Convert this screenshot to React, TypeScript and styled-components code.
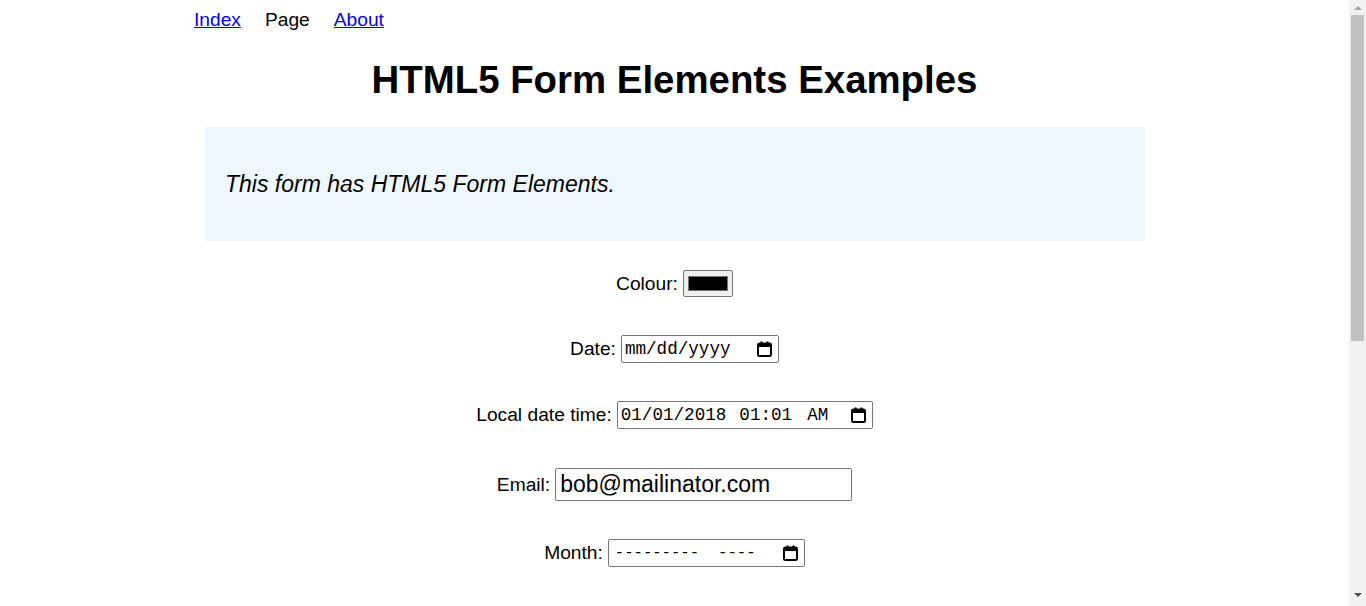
import React from "react";
import styled, { createGlobalStyle } from "styled-components";

const GlobalStyle = createGlobalStyle`
  html, body { margin: 0; padding: 0; height: 100%; overflow: hidden; }
  body {
    font-family: "Liberation Sans", Arial, sans-serif;
    font-size: 19.2px;
    color: #000;
    background: #fff;
  }
`;

const Window = styled.div`
  display: flex;
  height: 606px;
`;

const Viewport = styled.div`
  flex: 1;
  overflow: hidden;
`;

const Scrollbar = styled.div`
  width: 17px;
  background: #f1f1f1;
  display: flex;
  flex-direction: column;
  align-items: center;
`;

const ScrollArrow = styled.div<{ $dir: "up" | "down"; $color: string }>`
  width: 0;
  height: 0;
  border-left: 4px solid transparent;
  border-right: 4px solid transparent;
  ${(p) =>
    p.$dir === "up"
      ? `border-bottom: 4px solid ${p.$color}; margin-top: 6px;`
      : `border-top: 4px solid ${p.$color}; margin-bottom: 9px;`}
`;

const ScrollThumb = styled.div`
  width: 13px;
  height: 326px;
  margin-top: 5px;
  background: #c1c1c1;
`;

const ScrollSpacer = styled.div`
  flex: 1;
`;

const Page = styled.div`
  width: 961px;
  margin: 0 auto;
`;

const NavList = styled.ul`
  display: flex;
  list-style: none;
  margin: 0;
  padding: 9px 0 0 0;
  gap: 24px;
  line-height: 22px;
`;

const NavLink = styled.a`
  color: #0000ee;
  text-decoration: underline;
`;

const NavCurrent = styled.span`
  color: #000;
`;

const Title = styled.h1`
  text-align: center;
  font-size: 38.4px;
  font-weight: bold;
  margin: 27px 0 0 0;
  line-height: 44px;
`;

const Intro = styled.div`
  margin: 25px 10px 0 10px;
  background: #f0f8ff;
  height: 114px;
  padding: 0 21px;
  display: flex;
  align-items: center;
`;

const IntroText = styled.p`
  margin: 0;
  font-style: italic;
  font-size: 23px;
  line-height: 24px;
`;

const Form = styled.form`
  display: flex;
  flex-direction: column;
  align-items: center;
  padding-top: 29px;
`;

const Row = styled.div<{ $gap: number }>`
  margin: 0 0 ${(p) => p.$gap}px 0;
  display: flex;
  align-items: center;
  gap: 5px;
  line-height: 22px;
`;

const ColourInput = styled.input`
  width: 50px;
  height: 27px;
  padding: 1px 2px;
  margin: 0;
  box-sizing: border-box;
  border: 1px solid #767676;
  border-radius: 2px;
  background: #efefef;
`;

const DateField = styled.div<{ $w: number }>`
  width: ${(p) => p.$w}px;
  height: 28px;
  box-sizing: border-box;
  display: flex;
  align-items: center;
  padding: 0 6px 0 3px;
  border: 1px solid #767676;
  border-radius: 2px;
  background: #fff;
  font-family: "Liberation Mono", "DejaVu Sans Mono", monospace;
  font-size: 17.6px;
  color: #000;
  white-space: pre;
`;

const Segment = styled.span<{ $ml?: number; $size?: number }>`
  margin-left: ${(p) => p.$ml ?? 0}px;
  font-size: ${(p) => (p.$size ? `${p.$size}px` : "inherit")};
  line-height: 20px;
`;

const FieldSpacer = styled.span`
  flex: 1;
`;

const EmailInput = styled.input`
  width: 297px;
  height: 33px;
  box-sizing: border-box;
  margin: 0;
  padding: 1px 4px;
  border: 1px solid #767676;
  border-radius: 2px;
  font-family: "Liberation Sans", Arial, sans-serif;
  font-size: 23px;
  color: #000;
`;

const CalendarIcon = () => (
  <svg width="15" height="16" viewBox="0 0 15 16" aria-hidden="true">
    <rect x="1" y="2.5" width="13" height="12.5" rx="1.5" fill="none" stroke="#000" strokeWidth="2" />
    <rect x="1" y="3" width="13" height="3" fill="#000" />
    <rect x="3.5" y="0.5" width="2" height="3" fill="#000" />
    <rect x="9.5" y="0.5" width="2" height="3" fill="#000" />
  </svg>
);

export default function App() {
  return (
    <>
      <GlobalStyle />
      <Window>
        <Viewport>
          <Page>
            <nav>
              <NavList>
                <li><NavLink href="#">Index</NavLink></li>
                <li><NavCurrent>Page</NavCurrent></li>
                <li><NavLink href="#">About</NavLink></li>
              </NavList>
            </nav>
            <Title>HTML5 Form Elements Examples</Title>
            <Intro>
              <IntroText>This form has HTML5 Form Elements.</IntroText>
            </Intro>
            <Form onSubmit={(e) => e.preventDefault()}>
              <Row $gap={38}>
                <label htmlFor="colour">Colour:</label>
                <ColourInput id="colour" type="color" defaultValue="#000000" />
              </Row>
              <Row $gap={38}>
                <label>Date:</label>
                <DateField $w={158}>
                  <Segment>mm/dd/yyyy</Segment>
                  <FieldSpacer />
                  <CalendarIcon />
                </DateField>
              </Row>
              <Row $gap={39}>
                <label>Local date time:</label>
                <DateField $w={256}>
                  <Segment>01/01/2018</Segment>
                  <Segment $ml={13}>01:01</Segment>
                  <Segment $ml={15}>AM</Segment>
                  <FieldSpacer />
                  <CalendarIcon />
                </DateField>
              </Row>
              <Row $gap={38}>
                <label htmlFor="email">Email:</label>
                <EmailInput id="email" type="email" defaultValue="bob@mailinator.com" />
              </Row>
              <Row $gap={38}>
                <label>Month:</label>
                <DateField $w={197}>
                  <Segment $ml={3} $size={15.6}>---------</Segment>
                  <Segment $ml={19} $size={15.6}>----</Segment>
                  <FieldSpacer />
                  <CalendarIcon />
                </DateField>
              </Row>
            </Form>
          </Page>
        </Viewport>
        <Scrollbar>
          <ScrollArrow $dir="up" $color="#a3a3a3" />
          <ScrollThumb />
          <ScrollSpacer />
          <ScrollArrow $dir="down" $color="#505050" />
        </Scrollbar>
      </Window>
    </>
  );
}
